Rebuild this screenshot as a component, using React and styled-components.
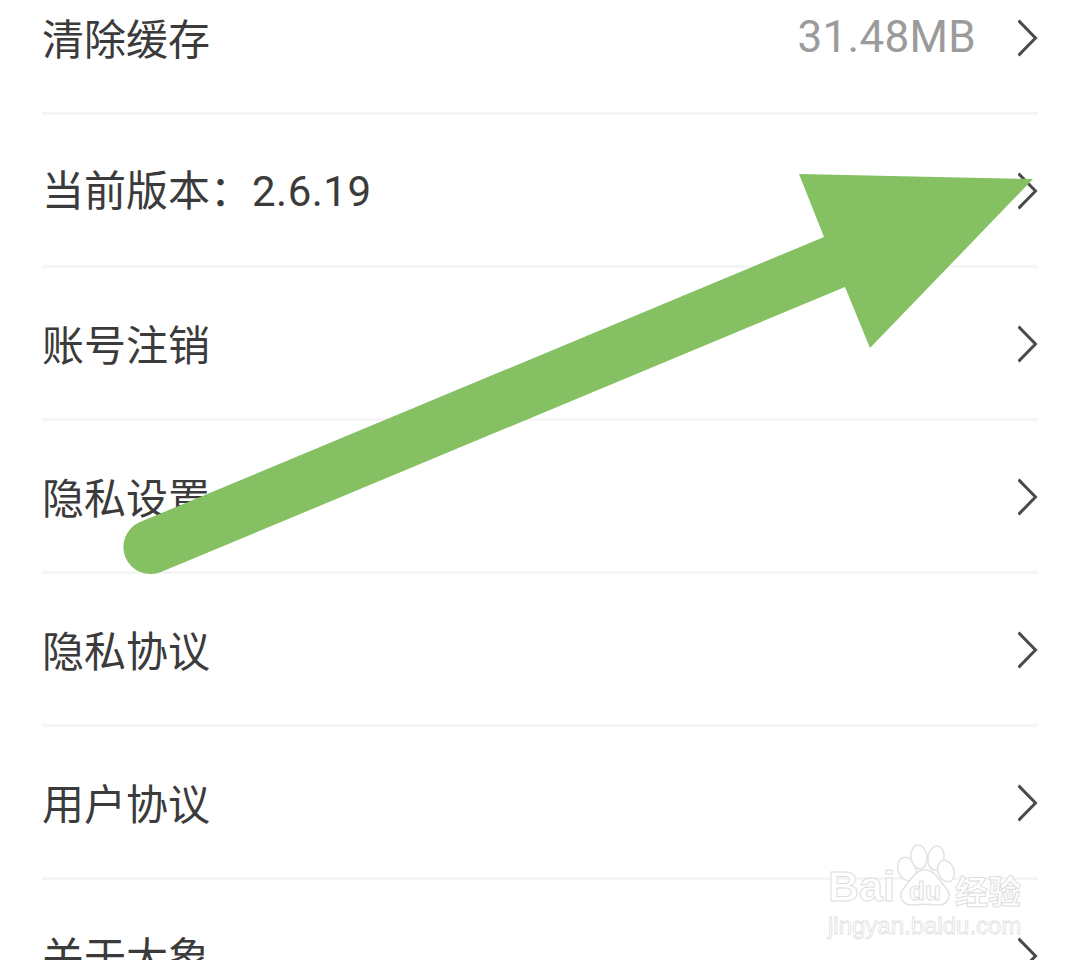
import styled, { createGlobalStyle } from 'styled-components'

const GlobalStyle = createGlobalStyle`
  html, body {
    margin: 0;
    padding: 0;
    background: #ffffff;
    overflow: hidden;
  }
`;

const Page = styled.div`
  position: relative;
  width: 1080px;
  height: 960px;
  overflow: hidden;
  background: #ffffff;
  font-family: "Noto Sans CJK SC", "Noto Sans", sans-serif;
`;

const List = styled.div`
  margin-top: -38px;
  padding: 0 42px;
`;

const Row = styled.div`
  display: flex;
  align-items: center;
  height: 150px;
  border-bottom: 3px solid ${({ $last }) => ($last ? 'transparent' : '#f5f5f5')};
`;

const Label = styled.span`
  flex: 1;
  font-size: 42px;
  line-height: 1;
  color: #3b3b3b;
`;

const Version = styled.span`
  font-family: Roboto, "Noto Sans", sans-serif;
  font-size: 42px;
  letter-spacing: 0.5px;
`;

const Value = styled.span`
  margin-right: 42px;
  font-family: Roboto, "Noto Sans", sans-serif;
  font-size: 44px;
  letter-spacing: 0.3px;
  line-height: 1;
  color: #9b9b9b;
`;

const Chevron = styled.svg`
  flex: none;
  width: 20px;
  height: 38px;
  margin-top: 2px;
  fill: none;
  stroke: #4a4a4a;
  stroke-width: 3;
`;

const Overlay = styled.svg`
  position: absolute;
  left: 0;
  top: 0;
  width: 1080px;
  height: 960px;
  pointer-events: none;
`;

const Watermark = styled.div`
  position: absolute;
  left: 828px;
  top: 844px;
  display: flex;
  flex-direction: column;
  gap: 6px;
  pointer-events: none;
`;

const Logo = styled.div`
  display: flex;
  align-items: flex-end;
  height: 64px;
`;

const PawMark = styled.div`
  display: grid;
  place-items: center;
  width: 60px;
  height: 64px;
  > * {
    grid-area: 1 / 1;
  }
`;

const Paw = styled.svg`
  width: 60px;
  height: 64px;
  fill: #ffffff;
  stroke: #e2e2e2;
  stroke-width: 1.5;
`;

const Brand = styled.span`
  font-family: "Liberation Sans", sans-serif;
  font-size: ${({ $size }) => $size}px;
  font-weight: 700;
  line-height: 1;
  white-space: nowrap;
  color: #ffffff;
  -webkit-text-stroke: 1px #dedede;
`;

const BrandCjk = styled(Brand)`
  font-family: "Noto Sans CJK SC", sans-serif;
  font-size: 33px;
  margin-bottom: 1px;
`;

const PawText = styled(Brand)`
  margin-top: 30px;
`;

const Domain = styled.span`
  font-family: "Liberation Sans", sans-serif;
  font-size: 24px;
  line-height: 1;
  white-space: nowrap;
  color: #ffffff;
  -webkit-text-stroke: 0.8px #e0e0e0;
`;

const rows = [
  { label: '清除缓存', value: '31.48MB' },
  { label: '当前版本：', version: '2.6.19' },
  { label: '账号注销' },
  { label: '隐私设置' },
  { label: '隐私协议' },
  { label: '用户协议' },
  { label: '关于大象' },
];

export default function App() {
  return (
    <Page>
      <GlobalStyle />
      <List>
        {rows.map((row, i) => (
          <Row key={row.label} $last={i === rows.length - 1}>
            <Label>
              {row.label}
              {row.version && <Version>{row.version}</Version>}
            </Label>
            {row.value && <Value>{row.value}</Value>}
            <Chevron viewBox="0 0 20 38">
              <path d="M0.5 1.5 L17.5 19 L0.5 36.5" />
            </Chevron>
          </Row>
        ))}
      </List>

      <Overlay viewBox="0 0 1080 960">
        <path
          d="M1033 179 L799 174 L824 237 L140 522 A27 27 0 0 0 161 572 L845 287 L870 348 Z"
          fill="#85c163"
        />
      </Overlay>

      <Watermark>
        <Logo>
          <Brand $size={43}>Bai</Brand>
          <PawMark>
            <Paw viewBox="0 0 60 64">
              <ellipse cx="12" cy="25" rx="9" ry="12" transform="rotate(-20 12 25)" />
              <ellipse cx="24" cy="13" rx="8" ry="12" transform="rotate(-8 24 13)" />
              <ellipse cx="41" cy="14" rx="8" ry="12" transform="rotate(8 41 14)" />
              <ellipse cx="51" cy="27" rx="8" ry="11" transform="rotate(-20 51 27)" />
              <path d="M30 26 C40 26 44 36 51 44 C58 52 52 62 42 61 C34 60 26 60 18 61 C8 62 2 52 9 44 C16 36 20 26 30 26 Z" />
            </Paw>
            <PawText $size={26}>du</PawText>
          </PawMark>
          <BrandCjk>经验</BrandCjk>
        </Logo>
        <Domain>jingyan.baidu.com</Domain>
      </Watermark>
    </Page>
  )
}
